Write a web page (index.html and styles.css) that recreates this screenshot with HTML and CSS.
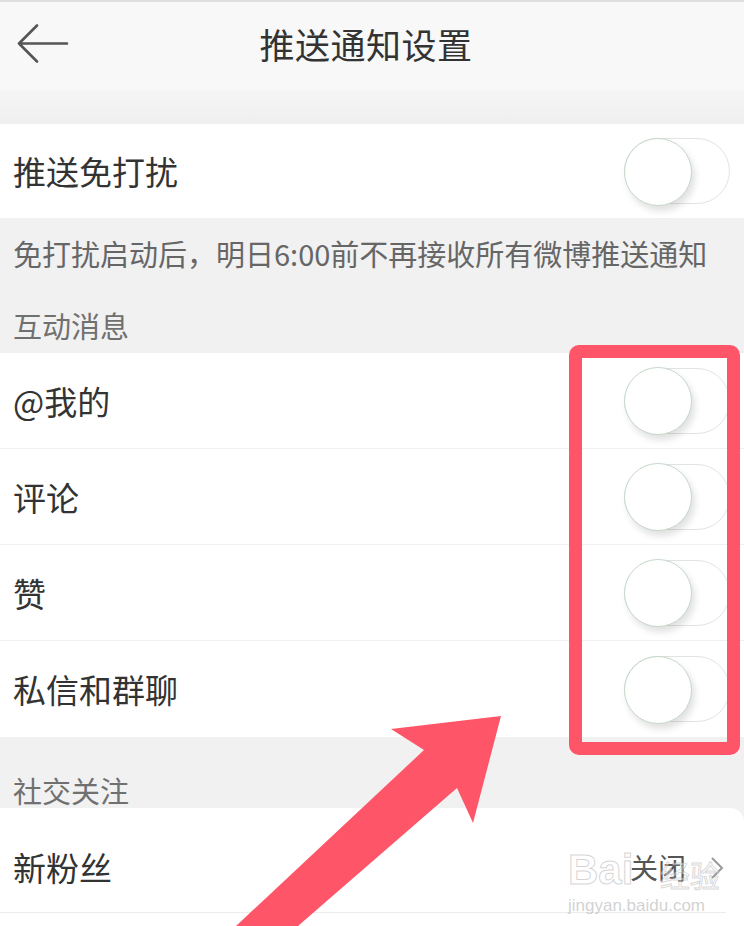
FILE: index.html
```html
<!DOCTYPE html>
<html lang="zh-CN">
<head>
<meta charset="utf-8">
<title>推送通知设置</title>
<link rel="stylesheet" href="styles.css">
</head>
<body>
<div class="page">
  <div class="topline"></div>
  <header class="header">
    <svg class="back" width="52" height="40" viewBox="0 0 52 40">
      <path d="M50 19.5H2M20 1.5L2 19.5L20 37.5" fill="none" stroke="#555" stroke-width="2.6" stroke-linecap="round" stroke-linejoin="round"/>
    </svg>
    <h1 class="title">推送通知设置</h1>
    <span class="spacer"></span>
  </header>
  <div class="band"></div>

  <div class="row row-dnd">
    <span class="label">推送免打扰</span>
    <span class="switch"></span>
  </div>

  <div class="note">
    <p class="desc">免打扰启动后，明日6:00前不再接收所有微博推送通知</p>
    <p class="section-title">互动消息</p>
  </div>

  <div class="group">
    <div class="row row-item"><span class="label">@我的</span><span class="switch"></span></div>
    <div class="row row-item"><span class="label">评论</span><span class="switch"></span></div>
    <div class="row row-item"><span class="label">赞</span><span class="switch"></span></div>
    <div class="row row-item"><span class="label">私信和群聊</span><span class="switch"></span></div>
  </div>

  <div class="section2">
    <p class="section-title2">社交关注</p>
  </div>

  <div class="card">
    <div class="row row-link">
      <span class="label">新粉丝</span>
      <span class="value">关闭
        <svg class="chev" width="14" height="24" viewBox="0 0 14 24"><path d="M2 2L12 12L2 22" fill="none" stroke="#9a9a9a" stroke-width="2"/></svg>
      </span>
    </div>
  </div>

  <div class="watermark">
    <span class="wm-bai">Bai</span><span class="wm-jy">经验</span>
    <span class="wm-url">jingyan.baidu.com</span>
  </div>

  <div class="highlight"></div>
  <svg class="arrow" width="744" height="926" viewBox="0 0 744 926">
    <polygon points="501,716 391,729 424,750 236,926 298,926 457,788 473,823" fill="#ff5568"/>
  </svg>
</div>
</body>
</html>
```

FILE: styles.css
```css
* { box-sizing: border-box; }
html, body { margin: 0; padding: 0; }
body {
  width: 744px;
  height: 926px;
  overflow: hidden;
  background: #f1f1f1;
  font-family: "Noto Sans CJK SC", "Noto Sans", sans-serif;
}
.page {
  position: relative;
  width: 744px;
  height: 926px;
  overflow: hidden;
  background: #f1f1f1;
}
.topline { height: 2px; background: #dedede; }
.header {
  height: 88px;
  background: #f8f8f8;
  display: grid;
  grid-template-columns: 90px 1fr 90px;
  align-items: center;
}
.back { margin-left: 17px; margin-top: -4px; }
.title {
  margin: 0;
  text-align: center;
  font-size: 35px;
  font-weight: normal;
  color: #333;
  letter-spacing: 0.5px;
  margin-left: -12px;
  margin-top: -6px;
}
.band {
  height: 34px;
  background: linear-gradient(#f5f5f5, #efefef);
}
.row {
  background: #fff;
  display: flex;
  align-items: center;
  justify-content: space-between;
  padding: 0 14px 0 13px;
}
.label {
  font-size: 33px;
  color: #333;
}
.row-dnd { height: 94px; }
.row-item {
  height: 96px;
  border-bottom: 1px solid #f0f0f0;
}
.row-item:last-child { border-bottom: none; }
.switch {
  position: relative;
  width: 106px;
  height: 66px;
  border-radius: 33px;
  border: 1.5px solid #e3e3e3;
  background: #fff;
  flex: none;
}
.switch::before {
  content: "";
  position: absolute;
  left: -1.5px;
  top: -1.5px;
  width: 66px;
  height: 66px;
  border-radius: 50%;
  border: 1.5px solid #c6d9c9;
  background: #fff;
  box-shadow: 3px 5px 7px rgba(0, 0, 0, 0.12);
}
.note {
  height: 135px;
  padding: 0 13px;
}
.desc {
  margin: 0;
  height: 70px;
  line-height: 70px;
  font-size: 29px;
  color: #666;
  white-space: nowrap;
}
.section-title {
  margin: 0;
  padding-top: 10px;
  line-height: 55px;
  font-size: 29px;
  color: #707070;
}
.group { background: #fff; }
.section2 {
  height: 71px;
  padding: 36px 13px 0;
}
.section-title2 {
  margin: 0;
  line-height: 34px;
  font-size: 29px;
  color: #707070;
}
.card {
  background: #fff;
  border-top-right-radius: 14px;
  height: 118px;
}
.row-link {
  height: 105px;
  padding-top: 14px;
  padding-right: 2px;
  border-bottom: 1px solid #ececec;
  margin: 0 18px 0 0;
  background: transparent;
}
.value {
  display: flex;
  align-items: center;
  gap: 24px;
  font-size: 28px;
  color: #555;
}
.chev { margin-top: 2px; }
.watermark {
  position: absolute;
  left: 568px;
  top: 838px;
  width: 170px;
  height: 80px;
  color: rgba(200, 200, 200, 0.55);
  font-family: "Liberation Sans", sans-serif;
  pointer-events: none;
}
.wm-bai {
  position: absolute;
  left: 0;
  top: 8px;
  font-size: 42px;
  font-weight: bold;
  color: rgba(255, 255, 255, 0.6);
  -webkit-text-stroke: 1px rgba(170, 170, 170, 0.5);
}
.wm-jy {
  position: absolute;
  left: 92px;
  top: 14px;
  font-size: 30px;
  font-family: "Noto Sans CJK SC", sans-serif;
  color: rgba(255, 255, 255, 0.4);
  -webkit-text-stroke: 1px rgba(170, 170, 170, 0.45);
}
.wm-url {
  position: absolute;
  left: 0;
  top: 58px;
  font-size: 17px;
  color: rgba(190, 190, 190, 0.7);
}
.highlight {
  position: absolute;
  left: 569px;
  top: 345px;
  width: 171px;
  height: 410px;
  border: 13px solid #ff5568;
  border-radius: 10px;
}
.arrow {
  position: absolute;
  left: 0;
  top: 0;
  pointer-events: none;
}
```
